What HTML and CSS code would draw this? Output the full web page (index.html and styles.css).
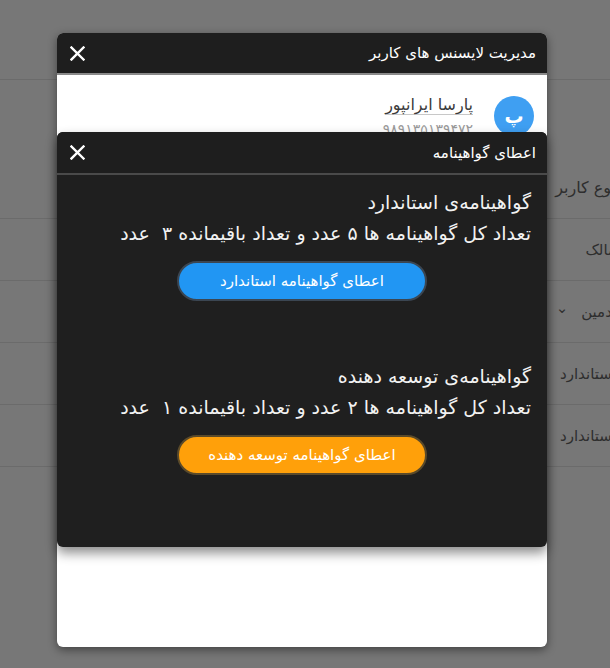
FILE: index.html
```html
<!DOCTYPE html>
<html lang="fa" dir="rtl">
<head>
<meta charset="utf-8">
<title>مدیریت لایسنس های کاربر</title>
<link rel="stylesheet" href="styles.css">
</head>
<body>
<div class="page">
  <div class="topbar"></div>
  <div class="table">
    <div class="row head"><span class="cell">نوع کاربر</span></div>
    <div class="row"><span class="cell">مالک</span></div>
    <div class="row"><span class="cell">ادمین <span class="chev">&#8964;</span></span></div>
    <div class="row"><span class="cell">استاندارد</span></div>
    <div class="row"><span class="cell">استاندارد</span></div>
  </div>
</div>

<div class="dialog outer">
  <div class="dlg-header">
    <span class="dlg-title big">مدیریت لایسنس های کاربر</span>
    <button class="close" aria-label="بستن">
      <svg width="15" height="15" viewBox="0 0 15 15"><path d="M1.5 1.5L13.5 13.5M13.5 1.5L1.5 13.5" stroke="#fff" stroke-width="2.4" stroke-linecap="square"/></svg>
    </button>
  </div>
  <div class="outer-body">
    <div class="user">
      <div class="avatar">پ</div>
      <div class="user-info">
        <span class="user-name">پارسا ایرانپور</span>
        <span class="user-phone">۹۸۹۱۳۵۱۳۹۴۷۲</span>
      </div>
    </div>
  </div>
</div>

<div class="dialog inner">
  <div class="dlg-header inner-header">
    <span class="dlg-title">اعطای گواهینامه</span>
    <button class="close" aria-label="بستن">
      <svg width="15" height="15" viewBox="0 0 15 15"><path d="M1.5 1.5L13.5 13.5M13.5 1.5L1.5 13.5" stroke="#fff" stroke-width="2.4" stroke-linecap="square"/></svg>
    </button>
  </div>
  <div class="inner-body">
    <section class="cert">
      <h3 class="cert-title">گواهینامه‌ی استاندارد</h3>
      <p class="cert-text">تعداد کل گواهینامه ها ۵ عدد و تعداد باقیمانده ۳&nbsp; عدد</p>
      <button class="grant blue">اعطای گواهینامه استاندارد</button>
    </section>
    <section class="cert second">
      <h3 class="cert-title">گواهینامه‌ی توسعه دهنده</h3>
      <p class="cert-text">تعداد کل گواهینامه ها ۲ عدد و تعداد باقیمانده ۱&nbsp; عدد</p>
      <button class="grant orange">اعطای گواهینامه توسعه دهنده</button>
    </section>
  </div>
</div>
</body>
</html>
```
FILE: styles.css
```css
html, body {
  margin: 0;
  padding: 0;
  width: 610px;
  height: 668px;
  overflow: hidden;
  background: #777777;
  font-family: "DejaVu Sans", sans-serif;
}

.page {
  width: 610px;
  height: 668px;
  background: #777777;
}

.topbar {
  height: 79px;
  border-bottom: 1px solid #6b6b6b;
}

.table {
  display: flex;
  flex-direction: column;
}

.row {
  height: 61px;
  border-bottom: 1px solid #6b6b6b;
  display: flex;
  align-items: center;
  justify-content: flex-start;
}

.row.head {
  height: 138px;
  align-items: flex-end;
}

.row.head .cell {
  padding-bottom: 21px;
  font-size: 16px;
}

.cell {
  margin-right: -6px;
  font-size: 15px;
  color: #2e2e2e;
  white-space: nowrap;
}

.chev {
  display: inline-block;
  margin-right: 8px;
  font-size: 15px;
  position: relative;
  top: -4px;
}

.dialog {
  position: absolute;
  left: 57px;
  width: 490px;
  border-radius: 6px;
  overflow: hidden;
}

.outer {
  top: 33px;
  height: 614px;
  background: #ffffff;
  box-shadow: 0 3px 10px rgba(0, 0, 0, 0.45);
}

.inner {
  top: 132px;
  height: 415px;
  background: #1f1f1f;
  box-shadow: 0 6px 12px rgba(0, 0, 0, 0.45);
  display: flex;
  flex-direction: column;
}

.dlg-header {
  height: 40px;
  background: #1e1e1e;
  border-bottom: 2px solid #8a8a8a;
  display: flex;
  align-items: center;
  justify-content: space-between;
  padding: 0 11px 0 12px;
}

.inner-header {
  height: 41px;
  border-bottom: 2px solid #4a4a4a;
}

.dlg-title {
  color: #ffffff;
  font-size: 15px;
}

.dlg-title.big {
  font-size: 15px;
}

.close {
  background: none;
  border: 0;
  padding: 0;
  margin-left: 1px;
  width: 15px;
  height: 15px;
  display: flex;
  cursor: pointer;
}

.outer-body {
  padding: 20px 13px 0 13px;
}

.user {
  display: flex;
  align-items: flex-start;
  gap: 21px;
}

.avatar {
  width: 40px;
  height: 40px;
  border-radius: 50%;
  background: #3f9ff2;
  color: #ffffff;
  font-size: 19px;
  font-weight: bold;
  display: flex;
  align-items: center;
  justify-content: center;
  margin-top: 1px;
}

.user-info {
  display: flex;
  flex-direction: column;
  align-items: flex-start;
  gap: 5px;
}

.user-name {
  font-size: 16px;
  color: #3a3a3a;
  border-bottom: 1px solid #c8c8c8;
  line-height: 19px;
}

.user-phone {
  font-size: 14px;
  color: #9a9a9a;
  line-height: 18px;
}

.inner-body {
  padding: 12px 16px 0 16px;
  display: flex;
  flex-direction: column;
}

.cert {
  display: flex;
  flex-direction: column;
  align-items: flex-start;
}

.cert.second {
  margin-top: 60px;
}

.cert-title,
.cert-text {
  margin: 0;
  color: #f2f2f2;
  font-size: 19px;
  font-weight: normal;
  line-height: 31px;
  white-space: nowrap;
}

.grant {
  align-self: center;
  margin-top: 12px;
  width: 250px;
  height: 40px;
  border-radius: 20px;
  border: 2px solid #3b4652;
  color: #ffffff;
  font-family: "DejaVu Sans", sans-serif;
  font-size: 15px;
  cursor: pointer;
}

.grant.blue {
  background: #2196f3;
}

.grant.orange {
  background: #ffa00a;
  border-color: #5a4a2a;
}
```
